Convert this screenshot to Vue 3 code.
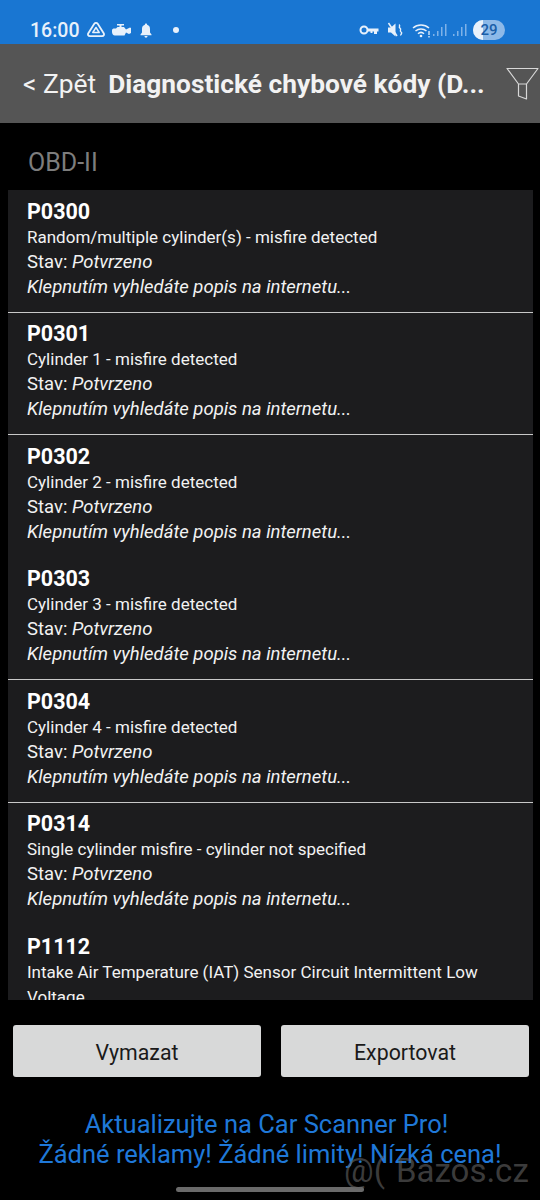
<template>
  <div class="screen">
    <div class="status-bar">
      <span class="clock">16:00</span>
      <svg class="st-icon drive" width="18" height="16" viewBox="0 0 18 16">
        <path d="M7.300 1.800c.8-1.200 2.600-1.200 3.400 0l6 9.500c.8 1.300 0 2.900-1.600 2.900H2.900c-1.600 0-2.400-1.600-1.600-2.900z" fill="none" stroke="#e8f1fb" stroke-width="1.800" />
        <path d="M9 5.500l3.200 5H5.800z" fill="none" stroke="#e8f1fb" stroke-width="1.500" stroke-linejoin="round" />
      </svg>
      <svg class="st-icon" width="19" height="13" viewBox="0 0 19 13">
        <path d="M0 6.500C0 5 1 4.500 2.500 4.500H4L5.500 3H7.500V1.500H5V0h7v1.500H9.500V3H12l2 2.500L18 3.500l1 .5V9l-2 1-3-1.500-1.500 3H3.500C1.500 12 0 10 0 8z" fill="#e8f1fb" />
      </svg>
      <svg class="st-icon bell" width="12" height="15" viewBox="0 0 12 15">
        <path d="M6 0.500c.7 0 1.100.5 1.100 1.200C9.200 2.300 10 4 10 6v3.500l1.500 2v.7H.5v-.7L2 9.500V6c0-2 .8-3.700 2.900-4.300C4.900 1 5.300.5 6 .5zM4.500 13h3c0 1-.7 1.700-1.500 1.700S4.500 14 4.500 13z" fill="#e8f1fb" />
      </svg>
      <span class="dot"></span>
      <span class="spacer"></span>
      <svg class="st-icon" width="20" height="10" viewBox="0 0 20 10">
        <circle cx="5" cy="5" r="3.500" fill="none" stroke="#e8f1fb" stroke-width="2" />
        <path d="M8 3.500h11.500v3H18V9h-3V6.500h-1.500V8h-2V6.500H8z" fill="#e8f1fb" />
      </svg>
      <svg class="st-icon mute" width="17" height="16" viewBox="0 0 17 16">
        <path d="M1 5.500h3L8.500 1.500v13L4 10.500H1z" fill="#e8f1fb" />
        <path d="M1.500 1l8.500 13" stroke="#e8f1fb" stroke-width="1.500" />
        <path d="M12 2.500c2 1.300-1 2.500 1 3.700s-1 2.500 1 3.800-1 2.300 0 3.500" fill="none" stroke="#e8f1fb" stroke-width="1.400" />
      </svg>
      <svg class="st-icon wifi" width="19" height="16" viewBox="0 0 19 16">
        <path d="M1 6a12 12 0 0 1 16 0M3.500 9a8.500 8.500 0 0 1 11 0M6 11.700a4.500 4.500 0 0 1 6 0" fill="none" stroke="#e8f1fb" stroke-width="1.500" />
        <circle cx="9" cy="14" r="1.300" fill="#e8f1fb" />
        <path d="M17 9v4M17 14v1.500" stroke="#e8f1fb" stroke-width="1.300" />
      </svg>
      <svg class="st-icon signal" width="15" height="14" viewBox="0 0 15 14">
        <path d="M1 11h1.500v2H1zM5 8h1.500v5H5zM9 4h1.500v9H9zM13 1h1.500v12H13z" fill="#7fb2e8" />
      </svg>
      <svg class="st-icon signal2" width="15" height="14" viewBox="0 0 15 14">
        <path d="M1 11h1.500v2H1zM5 8h1.500v5H5zM9 4h1.500v9H9zM13 1h1.500v12H13z" fill="#7fb2e8" />
      </svg>
      <span class="battery"><span class="battery-fill"></span><span class="battery-num">29</span></span>
    </div>

    <header class="nav">
      <span class="back">&lt; Zpět</span>
      <span class="title">Diagnostické chybové kódy (D...</span>
      <svg class="filter" width="33" height="33" viewBox="0 0 33 33">
        <path d="M1 1.500H32L20.500 17V32L12.500 29V17Z M12.500 17H20.500" fill="none" stroke="#d8d8d8" stroke-width="1.200" stroke-linejoin="round" />
      </svg>
    </header>

    <div class="section">OBD-II</div>

    <div class="list">
      <div v-for="c in codes" :key="c.code" class="row" :class="{ sep: c.sep }">
        <div class="code">{{ c.code }}</div>
        <div class="line desc">{{ c.desc }}</div>
        <div class="line">Stav: <em>Potvrzeno</em></div>
        <div class="line"><em>Klepnutím vyhledáte popis na internetu...</em></div>
      </div>
    </div>

    <div class="buttons">
      <button class="btn">Vymazat</button>
      <button class="btn">Exportovat</button>
    </div>

    <div class="promo">
      <div class="promo-first">Aktualizujte na Car Scanner Pro!</div>
      <div>Žádné reklamy! Žádné limity! Nízká cena!</div>
    </div>

    <div class="home-bar"></div>
    <div class="watermark">@(<span class="wm-name">Bazos.cz</span></div>
  </div>
</template>

<script setup>
const codes = [
  { code: 'P0300', desc: 'Random/multiple cylinder(s) - misfire detected', sep: true },
  { code: 'P0301', desc: 'Cylinder 1 - misfire detected', sep: true },
  { code: 'P0302', desc: 'Cylinder 2 - misfire detected', sep: false },
  { code: 'P0303', desc: 'Cylinder 3 - misfire detected', sep: true },
  { code: 'P0304', desc: 'Cylinder 4 - misfire detected', sep: true },
  { code: 'P0314', desc: 'Single cylinder misfire - cylinder not specified', sep: false },
  { code: 'P1112', desc: 'Intake Air Temperature (IAT) Sensor Circuit Intermittent Low Voltage', sep: false }
]
</script>

<style>
html, body {
  margin: 0;
  background: #000;
}
</style>

<style scoped>
.screen {
  position: relative;
  width: 540px;
  height: 1200px;
  overflow: hidden;
  background: #000;
  font-family: Roboto, "Liberation Sans", sans-serif;
  color: #fff;
}
.status-bar {
  height: 44px;
  box-sizing: border-box;
  padding: 16px 35px 0 30px;
  background: #1976d2;
  display: flex;
  align-items: center;
  color: #e8f1fb;
}
.clock {
  font-size: 19.500px;
  font-weight: 500;
  margin-right: 8px;
}
.st-icon {
  display: block;
  flex: none;
  margin-right: 7px;
}
.bell {
  margin-left: 2px;
}
.dot {
  width: 6px;
  height: 6px;
  border-radius: 50%;
  background: #e8f1fb;
  margin-left: 14px;
}
.spacer {
  flex: 1;
}
.mute {
  margin-left: 1px;
  margin-right: 8px;
}
.wifi {
  margin-right: 1px;
}
.signal {
  margin-right: 5px;
}
.signal2 {
  margin-right: 6px;
}
.battery {
  position: relative;
  width: 32px;
  height: 20px;
  border-radius: 10px;
  overflow: hidden;
  background: #8db9e8;
  display: flex;
  align-items: center;
  justify-content: center;
}
.battery-fill {
  position: absolute;
  left: 0;
  top: 0;
  bottom: 0;
  width: 10px;
  background: #e8f1fb;
}
.battery-num {
  position: relative;
  font-size: 15px;
  font-weight: 500;
  color: #1a5ea8;
}
.nav {
  height: 79px;
  background: #555;
  display: flex;
  align-items: center;
  padding-left: 23px;
  white-space: nowrap;
}
.back {
  font-size: 26.400px;
  color: #f2f2f2;
  margin-right: 12px;
}
.title {
  font-size: 26.300px;
  font-weight: 700;
  color: #f2f2f2;
}
.filter {
  flex: none;
  margin-left: auto;
  margin-right: 1px;
}
.section {
  height: 67px;
  box-sizing: border-box;
  padding: 26px 0 0 28px;
  font-size: 25px;
  line-height: 28px;
  color: #7d7d7d;
}
.list {
  margin: 0 7px 0 8px;
  height: 810px;
  background: #1c1c1e;
  overflow: hidden;
}
.row {
  height: 122.500px;
  box-sizing: border-box;
  padding: 7.700px 10px 0 19px;
}
.row.sep {
  border-bottom: 1px solid #c8c8c8;
}
.code {
  font-size: 21.500px;
  font-weight: 700;
  line-height: 27.200px;
}
.line {
  font-size: 18.500px;
  line-height: 25px;
  color: #f2f2f2;
}
.line.desc {
  font-size: 17px;
}
.line em {
  font-style: italic;
}
.buttons {
  display: grid;
  grid-template-columns: 248px 248px;
  column-gap: 20px;
  padding: 25px 0 0 13px;
}
.btn {
  height: 52px;
  padding: 2px 0 0;
  border: 0;
  border-radius: 3px;
  background: #d8d9d9;
  color: #1a1a1a;
  font-family: inherit;
  font-size: 21.300px;
}
.promo {
  margin-top: 32px;
  text-align: center;
  font-size: 25.500px;
  line-height: 30px;
  color: #1f78d8;
  white-space: nowrap;
}
.promo-first {
  padding-right: 7px;
}
.home-bar {
  position: absolute;
  left: 176px;
  top: 1187px;
  width: 188px;
  height: 5px;
  border-radius: 3px;
  background: #6a6a6a;
}
.watermark {
  position: absolute;
  left: 344px;
  top: 1151px;
  font-size: 33px;
  line-height: 40px;
  color: rgba(100, 100, 100, 0.6);
  white-space: nowrap;
}
.wm-name {
  margin-left: 11px;
}
</style>
